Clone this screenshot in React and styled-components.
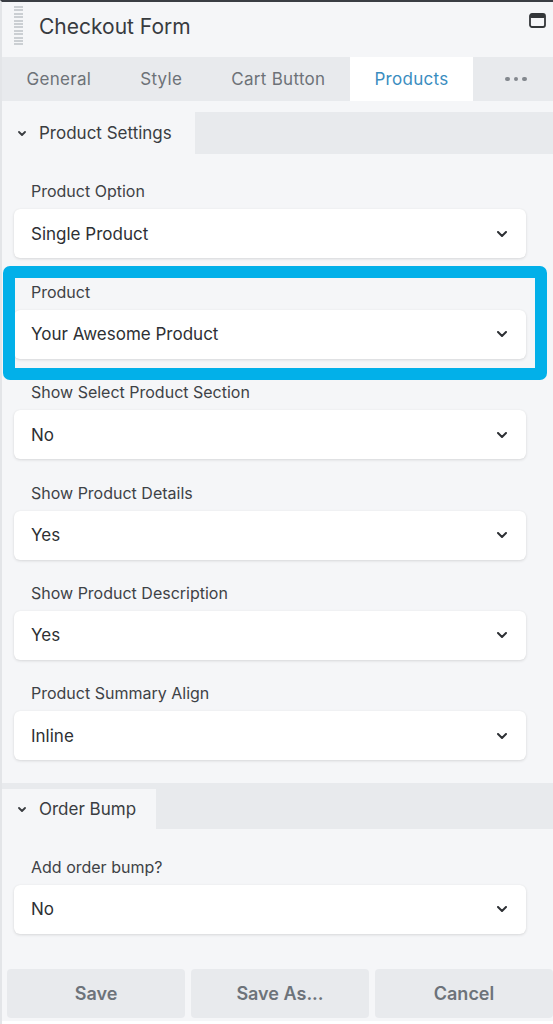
import React from "react";
import styled, { createGlobalStyle } from "styled-components";

const Global = createGlobalStyle`
  html, body { margin: 0; padding: 0; background: #f5f6f8; }
  body { font-family: Inter, "Liberation Sans", Arial, sans-serif; -webkit-font-smoothing: antialiased; }
  * { box-sizing: border-box; }
`;

const Panel = styled.div`
  width: 553px;
  height: 1024px;
  overflow: hidden;
  background: #f5f6f8;
  border-top: 2px solid #3a3e44;
  border-left: 2px solid #e3e5e8;
  display: flex;
  flex-direction: column;
`;

const Header = styled.div`
  height: 55px;
  display: flex;
  align-items: center;
  padding: 0 7px 0 12px;
`;

const Grip = styled.div`
  width: 9px;
  height: 40px;
  margin-top: -7px;
  background: repeating-linear-gradient(to bottom, #cbcfd3 0 2px, transparent 2px 3.4px);
`;

const Title = styled.div`
  margin-left: 16px;
  font-size: 21px;
  color: #383b3f;
  flex: 1;
  margin-top: -7px;
`;

const WinIcon = styled.svg`
  width: 17px;
  height: 15px;
  margin-top: -19px;
`;

const Tabs = styled.div`
  height: 44px;
  background: #e8eaed;
  display: flex;
  align-items: stretch;
`;

const Tab = styled.div`
  display: flex;
  align-items: center;
  padding: 0 24.5px;
  font-size: 17px;
  letter-spacing: 0.3px;
  color: ${(p) => (p.$active ? "#3a8dbf" : "#6d7278")};
  background: ${(p) => (p.$active ? "#ffffff" : "transparent")};
  white-space: nowrap;
`;

const MoreTab = styled.div`
  flex: 1;
  display: flex;
  align-items: center;
  gap: 4px;
  padding-left: 32px;
`;

const Dot = styled.span`
  width: 4.5px;
  height: 4.5px;
  border-radius: 50%;
  background: #83888e;
`;

const Body = styled.div`
  padding-top: 11px;
  display: flex;
  flex-direction: column;
`;

const SectionBar = styled.div`
  background: #e8eaed;
  padding-top: ${(p) => p.$offset || 0}px;
  display: flex;
`;

const SectionTab = styled.div`
  height: ${(p) => p.$h}px;
  width: ${(p) => p.$w}px;
  background: #f5f6f8;
  display: flex;
  align-items: center;
  gap: 13px;
  padding-left: 16px;
  font-size: 17px;
  color: #3a3d41;
`;

const Fields = styled.div`
  padding-top: 4px;
  display: flex;
  flex-direction: column;
`;

const Field = styled.div`
  position: relative;
  padding: 23.4px 27px 0 12px;
  display: flex;
  flex-direction: column;
  gap: 8px;
`;

const Label = styled.div`
  padding-left: 17px;
  font-size: 16px;
  line-height: 20px;
  color: #3e4246;
`;

const Select = styled.div`
  height: 49px;
  background: #ffffff;
  border-radius: 6px;
  box-shadow: 0 1px 3px rgba(0, 0, 0, 0.12), 0 0 1px rgba(0, 0, 0, 0.06);
  display: flex;
  align-items: center;
  justify-content: space-between;
  padding: 0 19px 0 17px;
  font-size: 17px;
  color: #2d3034;
`;

const Highlight = styled.div`
  position: absolute;
  left: 1px;
  right: 6px;
  top: 8px;
  bottom: -21px;
  border: 12px solid #02b0e9;
  border-radius: 7px;
  pointer-events: none;
`;

const Spacer = styled.div`
  height: ${(p) => p.$h}px;
`;

const Buttons = styled.div`
  display: flex;
  gap: 6px;
  padding-left: 5px;
`;

const Button = styled.div`
  flex: 0 0 178px;
  height: 49px;
  background: #e8eaed;
  border-radius: 4px;
  display: flex;
  align-items: center;
  justify-content: center;
  font-size: 18px;
  font-weight: 600;
  color: #6d737a;
`;

const Footer = styled.div`
  margin-top: 3px;
  flex: 1;
  background: #ffffff;
`;

const Chevron = ({ size = 10 }) => (
  <svg width={size} height={size * 0.6} viewBox="0 0 10 6" fill="none">
    <path d="M1 1l4 4 4-4" stroke="#2d3034" strokeWidth="2" strokeLinecap="round" strokeLinejoin="round" />
  </svg>
);

const SmallChevron = () => (
  <svg width="8" height="5" viewBox="0 0 8 5" fill="none">
    <path d="M1 1l3 3 3-3" stroke="#3a3d41" strokeWidth="1.8" strokeLinecap="round" strokeLinejoin="round" />
  </svg>
);

const fields = [
  { label: "Product Option", value: "Single Product" },
  { label: "Product", value: "Your Awesome Product", hl: true },
  { label: "Show Select Product Section", value: "No" },
  { label: "Show Product Details", value: "Yes" },
  { label: "Show Product Description", value: "Yes" },
  { label: "Product Summary Align", value: "Inline" },
];

function FieldRow({ label, value, hl }) {
  return (
    <Field>
      <Label>{label}</Label>
      <Select>
        <span>{value}</span>
        <Chevron />
      </Select>
      {hl && <Highlight />}
    </Field>
  );
}

export default function App() {
  return (
    <>
      <Global />
      <Panel>
        <Header>
          <Grip />
          <Title>Checkout Form</Title>
          <WinIcon viewBox="0 0 17 15" fill="none">
            <rect x="1" y="1" width="15" height="13" rx="2" stroke="#333639" strokeWidth="1.8" />
            <rect x="1" y="1" width="15" height="4" rx="1.5" fill="#333639" />
          </WinIcon>
        </Header>
        <Tabs>
          <Tab>General</Tab>
          <Tab>Style</Tab>
          <Tab>Cart Button</Tab>
          <Tab $active>Products</Tab>
          <MoreTab>
            <Dot />
            <Dot />
            <Dot />
          </MoreTab>
        </Tabs>
        <Body>
          <SectionBar>
            <SectionTab $w={193} $h={42}>
              <SmallChevron />
              <span>Product Settings</span>
            </SectionTab>
          </SectionBar>
          <Fields>
            {fields.map((f) => (
              <FieldRow key={f.label} {...f} />
            ))}
          </Fields>
          <Spacer $h={23} />
          <SectionBar $offset={6}>
            <SectionTab $w={154} $h={40}>
              <SmallChevron />
              <span>Order Bump</span>
            </SectionTab>
          </SectionBar>
          <Fields>
            <FieldRow label="Add order bump?" value="No" />
          </Fields>
          <Spacer $h={35} />
          <Buttons>
            <Button>Save</Button>
            <Button>Save As...</Button>
            <Button>Cancel</Button>
          </Buttons>
        </Body>
        <Footer />
      </Panel>
    </>
  );
}
